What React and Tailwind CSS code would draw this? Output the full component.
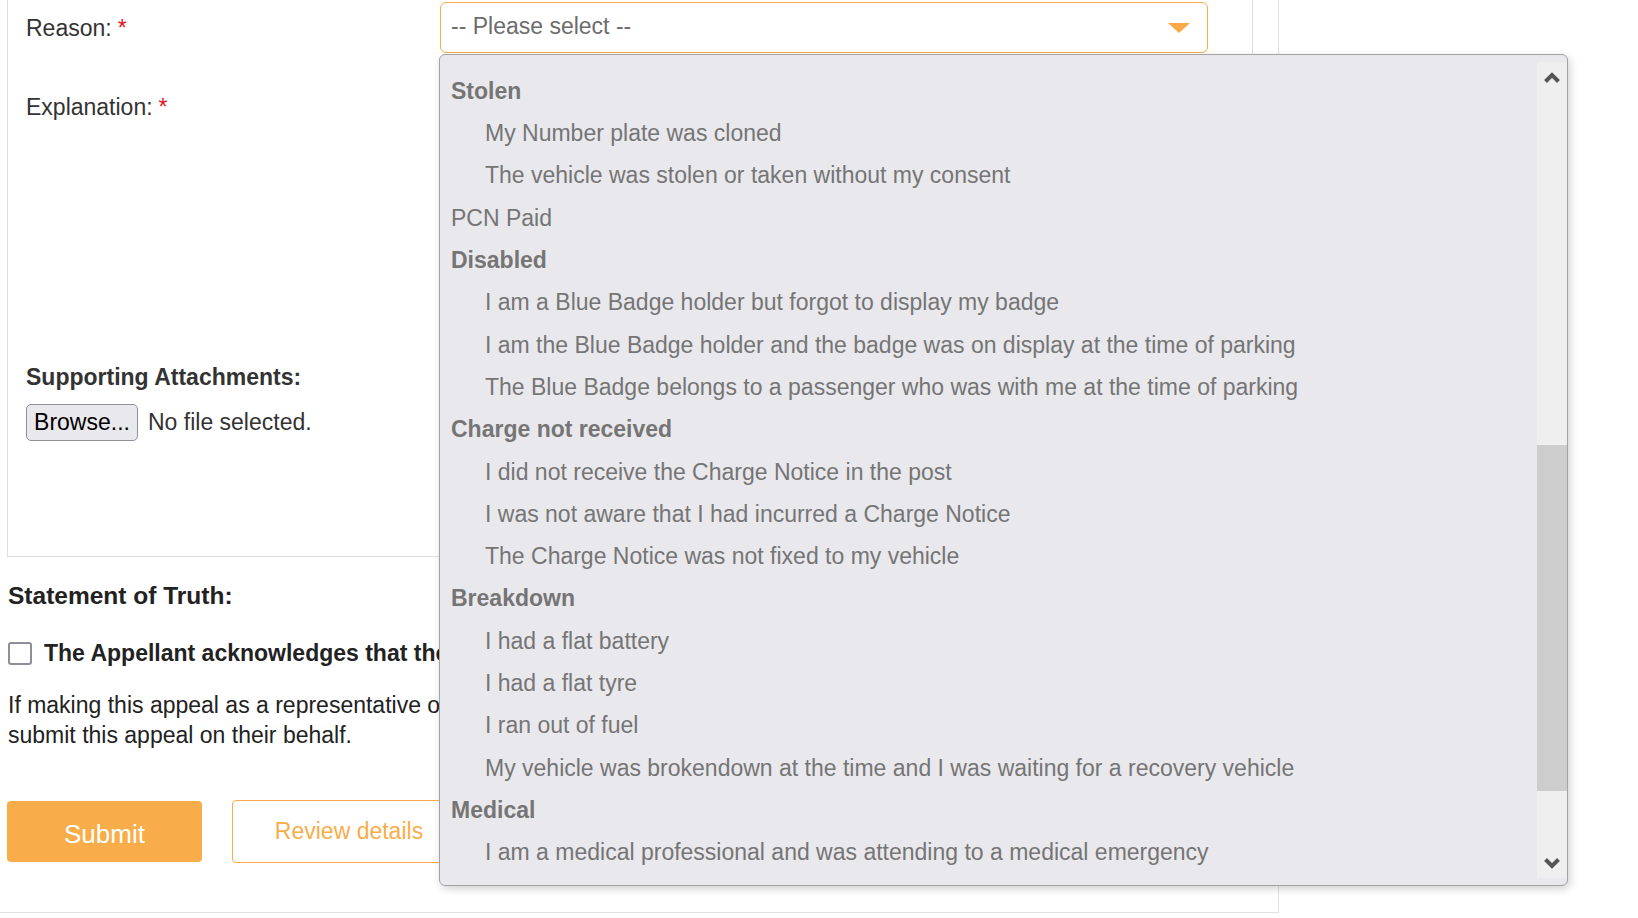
import React from 'react'

const groups = [
  { label: 'Stolen', items: ['My Number plate was cloned', 'The vehicle was stolen or taken without my consent'] },
  { label: 'PCN Paid', plain: true },
  {
    label: 'Disabled',
    items: [
      'I am a Blue Badge holder but forgot to display my badge',
      'I am the Blue Badge holder and the badge was on display at the time of parking',
      'The Blue Badge belongs to a passenger who was with me at the time of parking',
    ],
  },
  {
    label: 'Charge not received',
    items: [
      'I did not receive the Charge Notice in the post',
      'I was not aware that I had incurred a Charge Notice',
      'The Charge Notice was not fixed to my vehicle',
    ],
  },
  {
    label: 'Breakdown',
    items: [
      'I had a flat battery',
      'I had a flat tyre',
      'I ran out of fuel',
      'My vehicle was brokendown at the time and I was waiting for a recovery vehicle',
    ],
  },
  { label: 'Medical', items: ['I am a medical professional and was attending to a medical emergency'] },
]

const Required = () => <span className="text-[#e3141f] ml-[6px]">*</span>

// the open native listbox of the Reason select
const Dropdown = () => (
  <div className="absolute left-[439px] top-[54px] w-[1129px] h-[832px] bg-[#e9e8ed] border border-[#a3a3a3] rounded-[6px] shadow-[2px_3px_8px_rgba(0,0,0,0.18)] overflow-hidden">
    <div className="pt-[15px] text-[23px] text-[#757575]">
      {groups.map((g) => (
        <div key={g.label}>
          <div className={`h-[42.3px] flex items-center pl-[11px] ${g.plain ? '' : 'font-bold'}`}>{g.label}</div>
          {g.items?.map((item) => (
            <div key={item} className="h-[42.3px] flex items-center pl-[45px]">{item}</div>
          ))}
        </div>
      ))}
    </div>

    {/* scrollbar */}
    <div className="absolute right-0 top-[7px] bottom-[7px] w-[30px] bg-[#efefef]">
      <svg className="absolute left-[7px] top-[10px]" width="16" height="11" viewBox="0 0 16 11">
        <path d="M1.5 9.5 L8 3 L14.5 9.5" fill="none" stroke="#555" strokeWidth="4" />
      </svg>
      <div className="absolute left-0 right-0 top-[383px] h-[346px] bg-[#cdcdcd]" />
      <svg className="absolute left-[7px] bottom-[9px]" width="16" height="11" viewBox="0 0 16 11">
        <path d="M1.5 1.5 L8 8 L14.5 1.5" fill="none" stroke="#555" strokeWidth="4" />
      </svg>
    </div>
  </div>
)

const App = () => {
  return (
    <div className="relative min-h-[918px] bg-white font-['Liberation_Sans',Arial,sans-serif] text-[23px] text-[#333]">
      <div className="w-[1279px] border-r border-b border-[#e2e2e2] pl-[7px] pr-[25px] pb-[49px]">
        {/* form panel */}
        <div className="border-l border-r border-b border-[#dedede] pl-[18px] pb-[115px]">
          <div className="flex">
            <div className="w-[414px] pt-[15px] leading-[27px]">Reason:<Required /></div>
            <div className="mt-[2px] w-[768px] h-[51px] border border-[#f8ad4a] rounded-[6px] bg-white flex items-center justify-between pl-[10px] pr-[17px]">
              <span className="text-[#6c6c6c] -mt-[3px]">-- Please select --</span>
              <svg width="22" height="10" viewBox="0 0 22 10">
                <path d="M0 0 H22 L11 10 Z" fill="#f9a947" />
              </svg>
            </div>
          </div>

          <div className="flex items-start">
            <div className="w-[414px] pt-[41px] leading-[27px]">Explanation:<Required /></div>
            <textarea className="mt-[17px] w-[768px] h-[250px] border border-[#ccc] rounded-[6px] resize-none" />
          </div>

          <div className="mt-[44px] font-bold leading-[27px]">Supporting Attachments:</div>
          <div className="mt-[13px] flex items-center gap-[10px]">
            <button type="button" className="h-[37px] w-[112px] bg-[#e9e9ed] border border-[#8f8f9d] rounded-[5px] text-black">
              Browse...
            </button>
            <span>No file selected.</span>
          </div>
        </div>

        {/* statement of truth */}
        <div className="pl-px text-[#222]">
          <h3 className="mt-[25px] text-[24.5px] font-bold leading-[28px]">Statement of Truth:</h3>
          <label className="mt-[29px] flex items-center h-[28px] gap-[12px] w-[431px] overflow-hidden">
            <span className="shrink-0 w-[24px] h-[23px] border-2 border-[#8e8e9a] rounded-[3px] bg-white" />
            <span className="font-bold whitespace-nowrap">
              The Appellant acknowledges that the information provided is true
            </span>
          </label>
          <p className="mt-[23px] leading-[30px] w-[431px] overflow-hidden whitespace-nowrap">
            If making this appeal as a representative of the Appellant, I confirm I have authority to
            <br />
            submit this appeal on their behalf.
          </p>
          <div className="mt-[50px] flex items-center gap-[30px] -ml-px">
            <button type="button" className="w-[195px] h-[61px] bg-[#f8ad4a] rounded-[4px] text-white text-[26px] pt-[6px]">
              Submit
            </button>
            <button type="button" className="w-[234px] h-[63px] border border-[#f8ad4a] rounded-[4px] text-[#f8ad4a] text-[23px] bg-white">
              Review details
            </button>
          </div>
        </div>
      </div>

      <Dropdown />
    </div>
  )
}

export default App
